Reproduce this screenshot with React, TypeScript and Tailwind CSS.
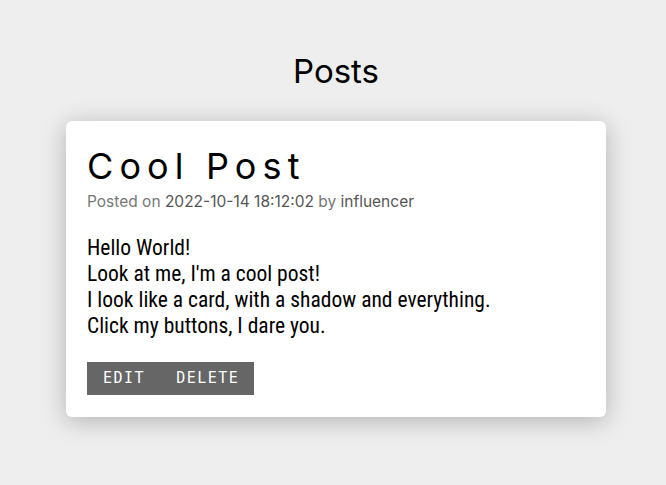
export default function App() {
    return (
        <div className="min-h-[485px] bg-[#eeeeee] flex flex-col items-center pt-[49px] pl-[6px] font-['Inter',sans-serif]">
            <h1 className="text-[33px] leading-[44px] text-black">Posts</h1>

            <div className="mt-[28px] w-[540px] bg-white rounded-[6px] shadow-[0_4px_24px_rgba(0,0,0,0.25)] px-[21px] pt-[22px] pb-[22px]">
                <h2 className="text-[36px] leading-[46px] tracking-[0.17em] text-black">Cool Post</h2>
                <p className="mt-[1px] text-[15.5px] leading-[24px] text-[#777]">
                    Posted on <span className="text-[#555]">2022-10-14 18:12:02</span> by <span className="text-[#555]">influencer</span>
                </p>

                <div className="mt-[21px] text-[21.5px] leading-[26px] text-black font-['Roboto_Condensed','Liberation_Sans_Narrow','Roboto',sans-serif]">
                    <p>Hello World!</p>
                    <p>Look at me, I'm a cool post!</p>
                    <p>I look like a card, with a shadow and everything.</p>
                    <p>Click my buttons, I dare you.</p>
                </div>

                <div className="mt-[23px] flex">
                    <div className="flex bg-[#666666] text-white font-['DejaVu_Sans_Mono',monospace] text-[15px] tracking-[0.1em] leading-[33px]">
                        <button className="pl-[16px] pr-[15px]">EDIT</button>
                        <button className="pl-[16px] pr-[15px]">DELETE</button>
                    </div>
                </div>
            </div>
        </div>
    );
}
